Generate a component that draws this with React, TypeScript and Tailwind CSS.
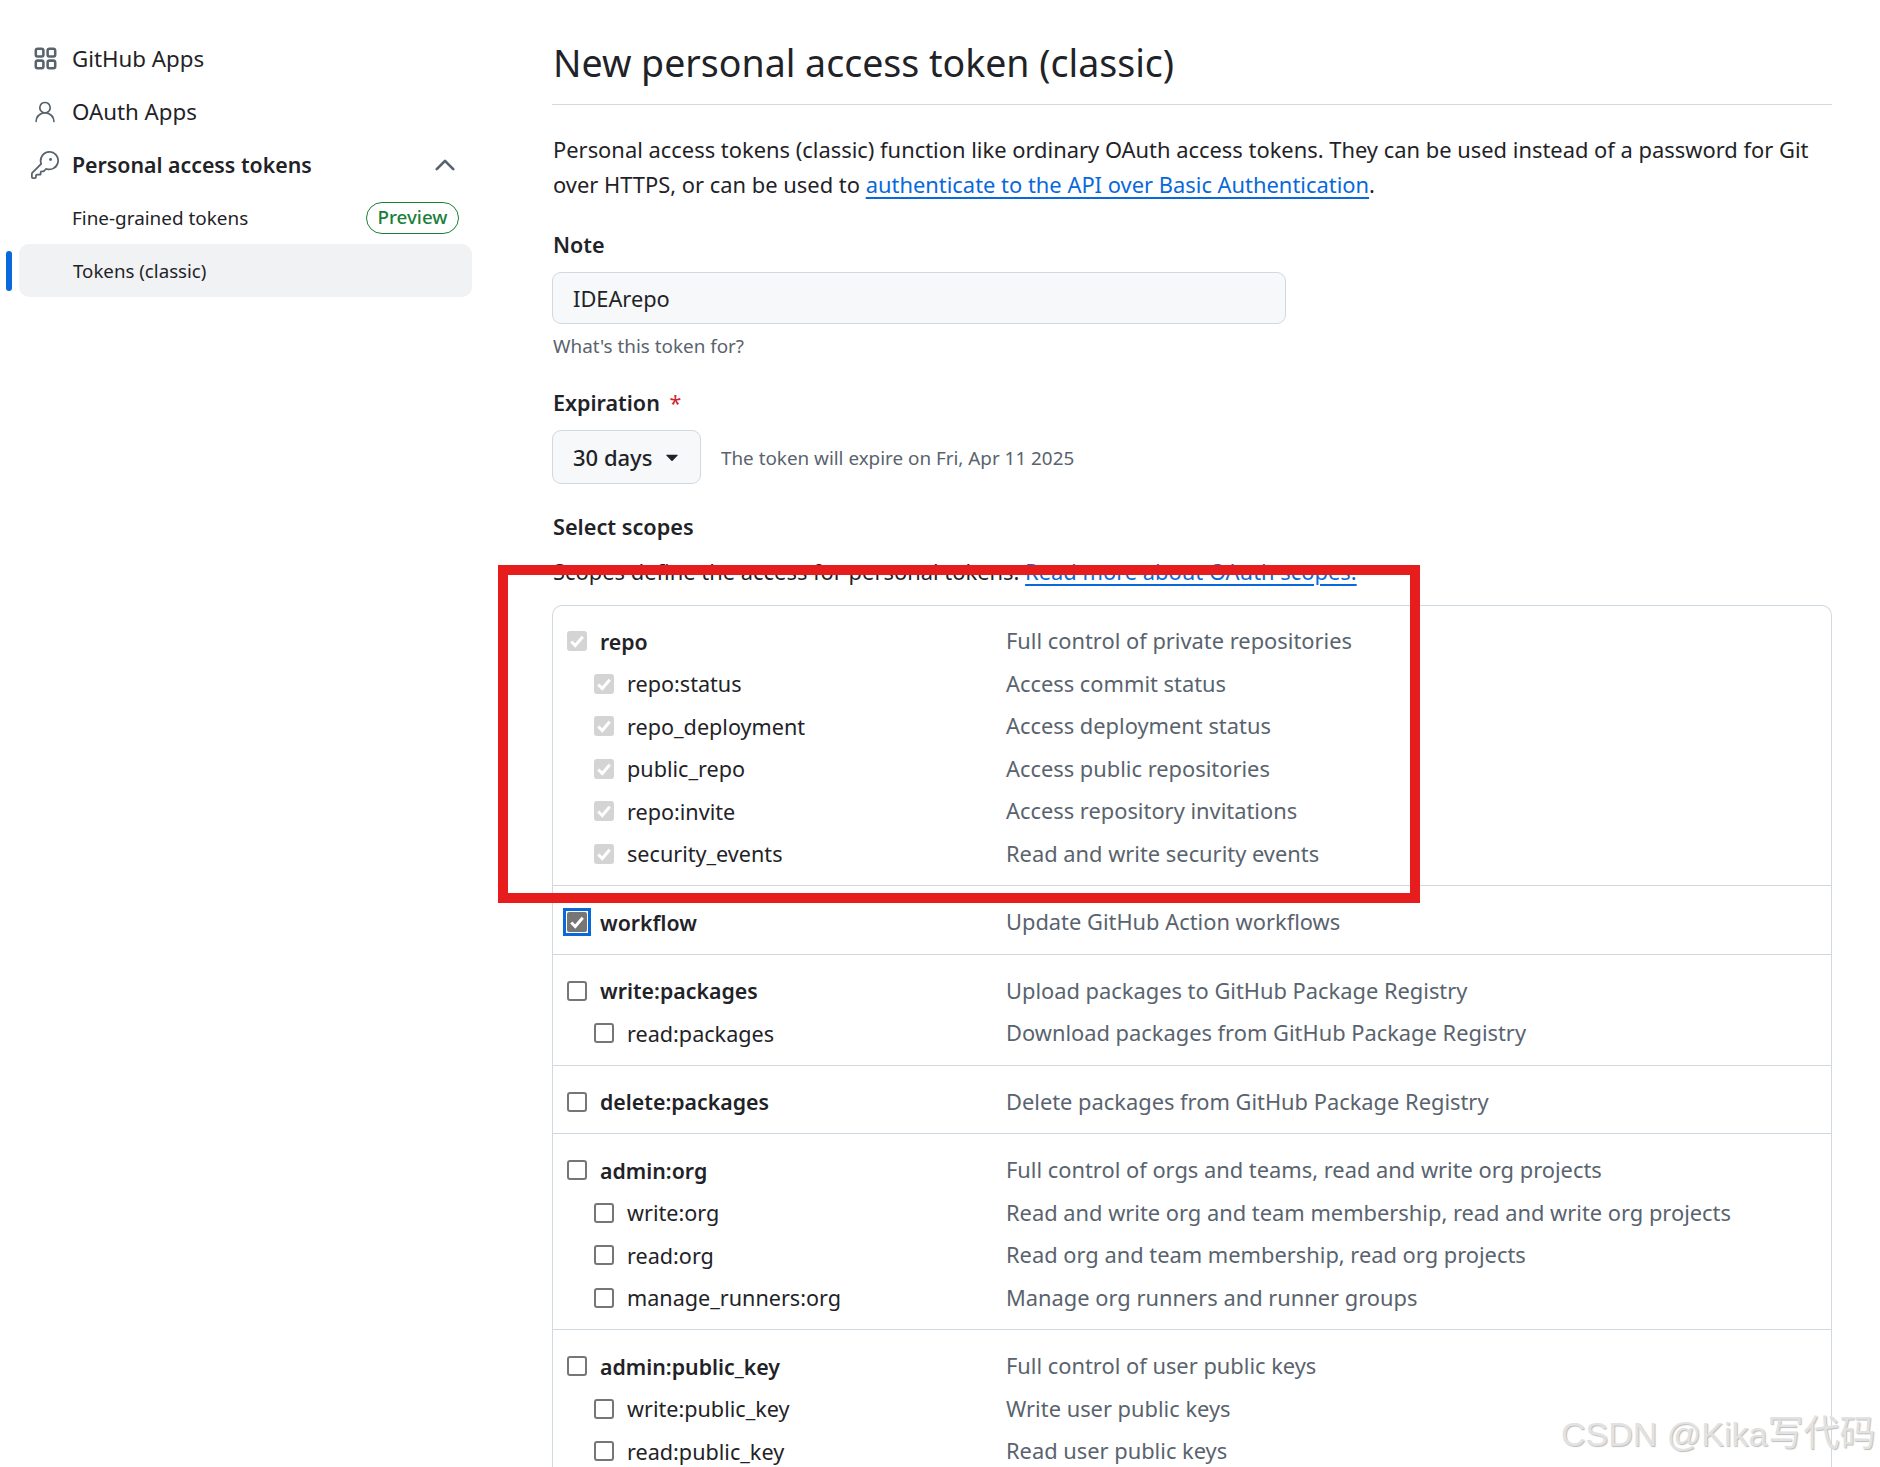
import type { ReactNode } from "react";
import { GoKey, GoPerson, GoTriangleDown } from "react-icons/go";

type Scope = { name: string; description: string; checked?: "disabled" | "focused" };
type ScopeGroup = { parent: Scope; children?: Scope[] };

const scopeGroups: ScopeGroup[] = [
  {
    parent: { name: "repo", description: "Full control of private repositories", checked: "disabled" },
    children: [
      { name: "repo:status", description: "Access commit status", checked: "disabled" },
      { name: "repo_deployment", description: "Access deployment status", checked: "disabled" },
      { name: "public_repo", description: "Access public repositories", checked: "disabled" },
      { name: "repo:invite", description: "Access repository invitations", checked: "disabled" },
      { name: "security_events", description: "Read and write security events", checked: "disabled" }
    ]
  },
  { parent: { name: "workflow", description: "Update GitHub Action workflows", checked: "focused" } },
  {
    parent: { name: "write:packages", description: "Upload packages to GitHub Package Registry" },
    children: [{ name: "read:packages", description: "Download packages from GitHub Package Registry" }]
  },
  { parent: { name: "delete:packages", description: "Delete packages from GitHub Package Registry" } },
  {
    parent: { name: "admin:org", description: "Full control of orgs and teams, read and write org projects" },
    children: [
      { name: "write:org", description: "Read and write org and team membership, read and write org projects" },
      { name: "read:org", description: "Read org and team membership, read org projects" },
      { name: "manage_runners:org", description: "Manage org runners and runner groups" }
    ]
  },
  {
    parent: { name: "admin:public_key", description: "Full control of user public keys" },
    children: [
      { name: "write:public_key", description: "Write user public keys" },
      { name: "read:public_key", description: "Read user public keys" }
    ]
  }
];

function AppsIcon() {
  return (
    <svg viewBox="0 0 16 16" width="27" height="27" fill="currentColor">
      <path d="M1.5 3.25c0-.966.784-1.75 1.75-1.75h2.5c.966 0 1.75.784 1.75 1.75v2.5A1.75 1.75 0 0 1 5.75 7.5h-2.5A1.75 1.75 0 0 1 1.5 5.75Zm7 0c0-.966.784-1.75 1.75-1.75h2.5c.966 0 1.75.784 1.75 1.75v2.5a1.75 1.75 0 0 1-1.75 1.75h-2.5A1.75 1.75 0 0 1 8.5 5.75Zm-7 7c0-.966.784-1.75 1.75-1.75h2.5c.966 0 1.75.784 1.75 1.75v2.5a1.75 1.75 0 0 1-1.75 1.75h-2.5a1.75 1.75 0 0 1-1.75-1.75Zm7 0c0-.966.784-1.75 1.75-1.75h2.5c.966 0 1.75.784 1.75 1.75v2.5a1.75 1.75 0 0 1-1.75 1.75h-2.5a1.75 1.75 0 0 1-1.75-1.75ZM3.25 3a.25.25 0 0 0-.25.25v2.5c0 .138.112.25.25.25h2.5A.25.25 0 0 0 6 5.75v-2.5A.25.25 0 0 0 5.75 3Zm7 0a.25.25 0 0 0-.25.25v2.5c0 .138.112.25.25.25h2.5a.25.25 0 0 0 .25-.25v-2.5a.25.25 0 0 0-.25-.25Zm-7 7a.25.25 0 0 0-.25.25v2.5c0 .138.112.25.25.25h2.5a.25.25 0 0 0 .25-.25v-2.5a.25.25 0 0 0-.25-.25Zm7 0a.25.25 0 0 0-.25.25v2.5c0 .138.112.25.25.25h2.5a.25.25 0 0 0 .25-.25v-2.5a.25.25 0 0 0-.25-.25Z" />
    </svg>
  );
}

function CheckMark() {
  return (
    <svg viewBox="0 0 16 16" className="h-full w-full" fill="none" stroke="#fff" strokeWidth="2.4">
      <path d="M3.4 8.4 6.6 11.6 12.6 4.6" />
    </svg>
  );
}

function ScopeCheckbox({ state }: { state?: Scope["checked"] }) {
  if (state === "disabled") {
    return (
      <span className="block h-[20px] w-[20px] rounded-[3px] bg-[#d4d4d4]">
        <CheckMark />
      </span>
    );
  }
  if (state === "focused") {
    return (
      <span className="-m-[4px] block border-[3px] border-[#0969da] bg-white p-[1px]">
        <span className="block h-[20px] w-[20px] rounded-[2px] bg-[#767676]">
          <CheckMark />
        </span>
      </span>
    );
  }
  return <span className="block h-[20px] w-[20px] rounded-[3px] border-2 border-[#767676] bg-white" />;
}

function ScopeRow({ scope, child }: { scope: Scope; child?: boolean }) {
  return (
    <div className="flex h-[42.5px] items-center">
      <div className={`flex w-[453px] shrink-0 items-center ${child ? "pl-[41px]" : "pl-[14px]"}`}>
        <ScopeCheckbox state={scope.checked} />
        <span className={`ml-[13px] pt-[1px] text-[#1f2328] ${child ? "text-[21.6px]" : "text-[21.3px] font-semibold"}`}>{scope.name}</span>
      </div>
      <span className="pt-[1px] text-[21.85px] text-[#59636e]">{scope.description}</span>
    </div>
  );
}

function SideItem({ icon, label, bold }: { icon: ReactNode; label: string; bold?: boolean }) {
  return (
    <div className="flex h-[53px] items-center">
      <span className="flex w-[72px] justify-center pl-[24px] pr-[6px] text-[#59636e]">{icon}</span>
      <span className={`text-[#1f2328] ${bold ? "text-[21.3px] font-semibold" : "text-[22.3px]"}`}>{label}</span>
    </div>
  );
}

export default function App() {
  return (
    <div className="relative flex h-[1467px] w-[1880px] overflow-hidden bg-white font-['Noto_Sans',sans-serif]">
      <aside className="w-[552px] shrink-0 pt-[32px]">
        <SideItem icon={<AppsIcon />} label="GitHub Apps" />
        <SideItem icon={<GoPerson size={26} />} label="OAuth Apps" />
        <div className="flex w-[472px] items-center justify-between pr-[16px]">
          <SideItem icon={<GoKey size={28} />} label="Personal access tokens" bold />
          <svg viewBox="0 0 16 16" width="22" height="22" fill="none" stroke="#59636e" strokeWidth="2" strokeLinecap="round" strokeLinejoin="round">
            <path d="M2 11 8 5l6 6" />
          </svg>
        </div>
        <div className="flex h-[53px] w-[472px] items-center justify-between pl-[72px] pr-[13px] text-[18.9px] text-[#1f2328]">
          <span className="pt-[2px]">Fine-grained tokens</span>
          <span className="flex h-[32px] w-[93px] items-center justify-center rounded-full border border-[#1a7f37] text-[18.8px] font-medium text-[#1a7f37]">
            Preview
          </span>
        </div>
        <div className="relative ml-[19px] flex h-[53px] w-[453px] items-center rounded-[10px] bg-[#f1f2f4] pl-[54px] pt-[2px] text-[18.7px] text-[#1f2328]">
          <span className="absolute left-[-13px] top-[7px] h-[40px] w-[6px] rounded-full bg-[#0969da]" />
          Tokens (classic)
        </div>
      </aside>

      <main className="w-[1280px] shrink-0 text-[#1f2328]">
        <h1 className="mt-[37px] border-b border-[#d1d9e0] pb-[16px] pl-[1px] text-[37.5px] leading-[51px]">
          New personal access token (classic)
        </h1>
        <p className="mt-[27px] pl-[1px] text-[21.9px] leading-[35px]">
          Personal access tokens (classic) function like ordinary OAuth access tokens. They can be used instead of a password for Git
          over HTTPS, or can be used to{" "}
          <a className="text-[#0969da] underline underline-offset-[4px]">authenticate to the API over Basic Authentication</a>.
        </p>

        <div className="mt-[27px] pl-[1px] text-[21.5px] font-semibold leading-[32px]">Note</div>
        <div className="mt-[11px] flex h-[52px] w-[734px] items-center rounded-[9px] border border-[#d1d9e0] bg-[#f6f8fa] pl-[20px] pt-[2px] text-[21.8px]">
          IDEArepo
        </div>
        <div className="mt-[7px] pl-[1px] text-[18.85px] leading-[30px] text-[#59636e]">What's this token for?</div>

        <div className="mt-[26px] pl-[1px] text-[21.5px] font-semibold leading-[32px]">
          Expiration <span className="ml-[4px] font-normal text-[#d1242f]">*</span>
        </div>
        <div className="mt-[11px] flex items-center">
          <div className="flex h-[54px] w-[149px] items-center whitespace-nowrap rounded-[9px] border border-[#d1d9e0] bg-[#f6f8fa] pl-[20px] pt-[1px] text-[22px] font-medium">
            30 days
            <GoTriangleDown size={22} className="ml-[9px]" />
          </div>
          <span className="ml-[20px] pt-[3px] text-[18.85px] text-[#59636e]">The token will expire on Fri, Apr 11 2025</span>
        </div>

        <div className="mt-[27px] pl-[1px] text-[21.7px] font-semibold leading-[32px]">Select scopes</div>
        <p className="mt-[14px] pl-[1px] text-[21.9px] leading-[30px]">
          Scopes define the access for personal tokens.{" "}
          <a className="text-[#0969da] underline underline-offset-[4px]">Read more about OAuth scopes.</a>
        </p>

        <div className="mt-[18px] rounded-t-[10px] border border-b-0 border-[#d1d9e0] pt-[14px]">
          {scopeGroups.map((group, i) => (
            <div
              key={group.parent.name}
              className={i === 0 ? "pb-[10px]" : "border-t border-[#d1d9e0] pb-[10px] pt-[15px]"}
            >
              <ScopeRow scope={group.parent} />
              {group.children?.map((child) => <ScopeRow key={child.name} scope={child} child />)}
            </div>
          ))}
        </div>
      </main>

      {/* hand-drawn highlight box and image watermark sit on top of the page */}
      <div className="pointer-events-none absolute left-[498px] top-[565px] h-[338px] w-[922px] border-[10px] border-[#e71c1c]" />
      <div className="pointer-events-none absolute left-[1561px] top-[1407px] whitespace-nowrap font-['Liberation_Sans','Noto_Sans_CJK_SC',sans-serif] text-[34px] text-[#e2e2e2] [text-shadow:1px_1px_1px_#bdbdbd]">
        CSDN @Kika<span className="text-[36px]">写代码</span>
      </div>
    </div>
  );
}
